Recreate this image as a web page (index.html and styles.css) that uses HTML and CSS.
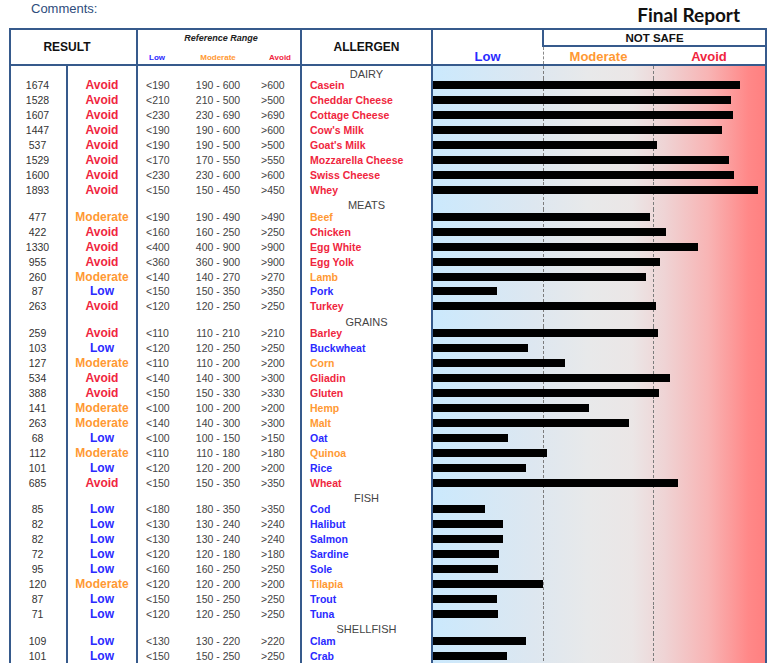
FILE: index.html
```html
<!DOCTYPE html>
<html lang="en">
<head>
<meta charset="utf-8">
<title>Final Report</title>
<link rel="stylesheet" href="styles.css">
</head>
<body>
<div class="top">
  <div class="comments">Comments:</div>
  <div class="title">Final Report</div>
</div>
<div class="report">
  <div class="head">
    <div class="h-result">RESULT</div>
    <div class="h-range">
      <div class="h-range-title">Reference Range</div>
      <div class="h-range-labels"><span class="c-low">Low</span><span class="c-mod">Moderate</span><span class="c-avo">Avoid</span></div>
    </div>
    <div class="h-allergen">ALLERGEN</div>
    <div class="h-chart">
      <div class="h-low c-low">Low</div>
      <div class="h-notsafe">
        <div class="notsafe">NOT SAFE</div>
        <div class="h-levels"><span class="c-mod">Moderate</span><span class="c-avo">Avoid</span></div>
      </div>
    </div>
  </div>
  <div class="body">
    <div class="row cat"><div></div><div></div><div></div><div class="n">DAIRY</div><div class="ch"></div></div>
    <div class="row is-avoid"><div class="v">1674</div><div class="s">Avoid</div><div class="rg"><span>&lt;190</span><span>190 - 600</span><span>&gt;600</span></div><div class="n">Casein</div><div class="ch"><div class="bar" style="width:307px"></div></div></div>
    <div class="row is-avoid"><div class="v">1528</div><div class="s">Avoid</div><div class="rg"><span>&lt;210</span><span>210 - 500</span><span>&gt;500</span></div><div class="n">Cheddar Cheese</div><div class="ch"><div class="bar" style="width:298px"></div></div></div>
    <div class="row is-avoid"><div class="v">1607</div><div class="s">Avoid</div><div class="rg"><span>&lt;230</span><span>230 - 690</span><span>&gt;690</span></div><div class="n">Cottage Cheese</div><div class="ch"><div class="bar" style="width:300px"></div></div></div>
    <div class="row is-avoid"><div class="v">1447</div><div class="s">Avoid</div><div class="rg"><span>&lt;190</span><span>190 - 600</span><span>&gt;600</span></div><div class="n">Cow's Milk</div><div class="ch"><div class="bar" style="width:289px"></div></div></div>
    <div class="row is-avoid"><div class="v">537</div><div class="s">Avoid</div><div class="rg"><span>&lt;190</span><span>190 - 500</span><span>&gt;500</span></div><div class="n">Goat's Milk</div><div class="ch"><div class="bar" style="width:224px"></div></div></div>
    <div class="row is-avoid"><div class="v">1529</div><div class="s">Avoid</div><div class="rg"><span>&lt;170</span><span>170 - 550</span><span>&gt;550</span></div><div class="n">Mozzarella Cheese</div><div class="ch"><div class="bar" style="width:296px"></div></div></div>
    <div class="row is-avoid"><div class="v">1600</div><div class="s">Avoid</div><div class="rg"><span>&lt;230</span><span>230 - 600</span><span>&gt;600</span></div><div class="n">Swiss Cheese</div><div class="ch"><div class="bar" style="width:301px"></div></div></div>
    <div class="row is-avoid"><div class="v">1893</div><div class="s">Avoid</div><div class="rg"><span>&lt;150</span><span>150 - 450</span><span>&gt;450</span></div><div class="n">Whey</div><div class="ch"><div class="bar" style="width:325px"></div></div></div>

    <div class="row cat"><div></div><div></div><div></div><div class="n">MEATS</div><div class="ch"></div></div>
    <div class="row is-mod"><div class="v">477</div><div class="s">Moderate</div><div class="rg"><span>&lt;190</span><span>190 - 490</span><span>&gt;490</span></div><div class="n">Beef</div><div class="ch"><div class="bar" style="width:217px"></div></div></div>
    <div class="row is-avoid"><div class="v">422</div><div class="s">Avoid</div><div class="rg"><span>&lt;160</span><span>160 - 250</span><span>&gt;250</span></div><div class="n">Chicken</div><div class="ch"><div class="bar" style="width:233px"></div></div></div>
    <div class="row is-avoid"><div class="v">1330</div><div class="s">Avoid</div><div class="rg"><span>&lt;400</span><span>400 - 900</span><span>&gt;900</span></div><div class="n">Egg White</div><div class="ch"><div class="bar" style="width:265px"></div></div></div>
    <div class="row is-avoid"><div class="v">955</div><div class="s">Avoid</div><div class="rg"><span>&lt;360</span><span>360 - 900</span><span>&gt;900</span></div><div class="n">Egg Yolk</div><div class="ch"><div class="bar" style="width:227px"></div></div></div>
    <div class="row is-mod"><div class="v">260</div><div class="s">Moderate</div><div class="rg"><span>&lt;140</span><span>140 - 270</span><span>&gt;270</span></div><div class="n">Lamb</div><div class="ch"><div class="bar" style="width:213px"></div></div></div>
    <div class="row is-low"><div class="v">87</div><div class="s">Low</div><div class="rg"><span>&lt;150</span><span>150 - 350</span><span>&gt;350</span></div><div class="n">Pork</div><div class="ch"><div class="bar" style="width:64px"></div></div></div>
    <div class="row is-avoid"><div class="v">263</div><div class="s">Avoid</div><div class="rg"><span>&lt;120</span><span>120 - 250</span><span>&gt;250</span></div><div class="n">Turkey</div><div class="ch"><div class="bar" style="width:223px"></div></div></div>

    <div class="row cat"><div></div><div></div><div></div><div class="n">GRAINS</div><div class="ch"></div></div>
    <div class="row is-avoid"><div class="v">259</div><div class="s">Avoid</div><div class="rg"><span>&lt;110</span><span>110 - 210</span><span>&gt;210</span></div><div class="n">Barley</div><div class="ch"><div class="bar" style="width:225px"></div></div></div>
    <div class="row is-low"><div class="v">103</div><div class="s">Low</div><div class="rg"><span>&lt;120</span><span>120 - 250</span><span>&gt;250</span></div><div class="n">Buckwheat</div><div class="ch"><div class="bar" style="width:95px"></div></div></div>
    <div class="row is-mod"><div class="v">127</div><div class="s">Moderate</div><div class="rg"><span>&lt;110</span><span>110 - 200</span><span>&gt;200</span></div><div class="n">Corn</div><div class="ch"><div class="bar" style="width:132px"></div></div></div>
    <div class="row is-avoid"><div class="v">534</div><div class="s">Avoid</div><div class="rg"><span>&lt;140</span><span>140 - 300</span><span>&gt;300</span></div><div class="n">Gliadin</div><div class="ch"><div class="bar" style="width:237px"></div></div></div>
    <div class="row is-avoid"><div class="v">388</div><div class="s">Avoid</div><div class="rg"><span>&lt;150</span><span>150 - 330</span><span>&gt;330</span></div><div class="n">Gluten</div><div class="ch"><div class="bar" style="width:226px"></div></div></div>
    <div class="row is-mod"><div class="v">141</div><div class="s">Moderate</div><div class="rg"><span>&lt;100</span><span>100 - 200</span><span>&gt;200</span></div><div class="n">Hemp</div><div class="ch"><div class="bar" style="width:156px"></div></div></div>
    <div class="row is-mod"><div class="v">263</div><div class="s">Moderate</div><div class="rg"><span>&lt;140</span><span>140 - 300</span><span>&gt;300</span></div><div class="n">Malt</div><div class="ch"><div class="bar" style="width:196px"></div></div></div>
    <div class="row is-low"><div class="v">68</div><div class="s">Low</div><div class="rg"><span>&lt;100</span><span>100 - 150</span><span>&gt;150</span></div><div class="n">Oat</div><div class="ch"><div class="bar" style="width:75px"></div></div></div>
    <div class="row is-mod"><div class="v">112</div><div class="s">Moderate</div><div class="rg"><span>&lt;110</span><span>110 - 180</span><span>&gt;180</span></div><div class="n">Quinoa</div><div class="ch"><div class="bar" style="width:114px"></div></div></div>
    <div class="row is-low"><div class="v">101</div><div class="s">Low</div><div class="rg"><span>&lt;120</span><span>120 - 200</span><span>&gt;200</span></div><div class="n">Rice</div><div class="ch"><div class="bar" style="width:93px"></div></div></div>
    <div class="row is-avoid"><div class="v">685</div><div class="s">Avoid</div><div class="rg"><span>&lt;150</span><span>150 - 350</span><span>&gt;350</span></div><div class="n">Wheat</div><div class="ch"><div class="bar" style="width:245px"></div></div></div>

    <div class="row cat"><div></div><div></div><div></div><div class="n">FISH</div><div class="ch"></div></div>
    <div class="row is-low"><div class="v">85</div><div class="s">Low</div><div class="rg"><span>&lt;180</span><span>180 - 350</span><span>&gt;350</span></div><div class="n">Cod</div><div class="ch"><div class="bar" style="width:52px"></div></div></div>
    <div class="row is-low"><div class="v">82</div><div class="s">Low</div><div class="rg"><span>&lt;130</span><span>130 - 240</span><span>&gt;240</span></div><div class="n">Halibut</div><div class="ch"><div class="bar" style="width:70px"></div></div></div>
    <div class="row is-low"><div class="v">82</div><div class="s">Low</div><div class="rg"><span>&lt;130</span><span>130 - 240</span><span>&gt;240</span></div><div class="n">Salmon</div><div class="ch"><div class="bar" style="width:70px"></div></div></div>
    <div class="row is-low"><div class="v">72</div><div class="s">Low</div><div class="rg"><span>&lt;120</span><span>120 - 180</span><span>&gt;180</span></div><div class="n">Sardine</div><div class="ch"><div class="bar" style="width:66px"></div></div></div>
    <div class="row is-low"><div class="v">95</div><div class="s">Low</div><div class="rg"><span>&lt;160</span><span>160 - 250</span><span>&gt;250</span></div><div class="n">Sole</div><div class="ch"><div class="bar" style="width:65px"></div></div></div>
    <div class="row is-mod"><div class="v">120</div><div class="s">Moderate</div><div class="rg"><span>&lt;120</span><span>120 - 200</span><span>&gt;200</span></div><div class="n">Tilapia</div><div class="ch"><div class="bar" style="width:110px"></div></div></div>
    <div class="row is-low"><div class="v">87</div><div class="s">Low</div><div class="rg"><span>&lt;150</span><span>150 - 250</span><span>&gt;250</span></div><div class="n">Trout</div><div class="ch"><div class="bar" style="width:64px"></div></div></div>
    <div class="row is-low"><div class="v">71</div><div class="s">Low</div><div class="rg"><span>&lt;120</span><span>120 - 250</span><span>&gt;250</span></div><div class="n">Tuna</div><div class="ch"><div class="bar" style="width:65px"></div></div></div>

    <div class="row cat"><div></div><div></div><div></div><div class="n">SHELLFISH</div><div class="ch"></div></div>
    <div class="row is-low"><div class="v">109</div><div class="s">Low</div><div class="rg"><span>&lt;130</span><span>130 - 220</span><span>&gt;220</span></div><div class="n">Clam</div><div class="ch"><div class="bar" style="width:93px"></div></div></div>
    <div class="row is-low"><div class="v">101</div><div class="s">Low</div><div class="rg"><span>&lt;150</span><span>150 - 250</span><span>&gt;250</span></div><div class="n">Crab</div><div class="ch"><div class="bar" style="width:74px"></div></div></div>
  </div>
</div>
</body>
</html>
```

FILE: styles.css
```css
html, body {
  margin: 0;
  height: 664px;
  overflow: hidden;
  background: #fff;
}

body {
  font-family: "Liberation Sans", Arial, sans-serif;
  color: #333;
}

.c-low { color: #2a2aff; }
.c-mod { color: #ff9933; }
.c-avo { color: #f0263e; }

.top {
  display: flex;
  justify-content: space-between;
  align-items: flex-start;
  height: 28px;
  padding: 0 35px 0 31px;
}

.comments {
  font-size: 13px;
  line-height: 15px;
  margin-top: 1px;
  color: #2e4c7c;
}

.title {
  font-family: Lato, "Liberation Sans", sans-serif;
  font-weight: 700;
  font-size: 19px;
  line-height: 22px;
  margin-top: 4px;
  color: #111;
}

.report {
  margin-left: 9px;
  width: 758px;
  box-sizing: border-box;
  border: 2px solid #365a8c;
  border-bottom: 0;
  background: #365a8c;
  display: flex;
  flex-direction: column;
  gap: 2px;
}

.head {
  display: grid;
  grid-template-columns: 125px 162px 129px 332px;
  column-gap: 2px;
  height: 34px;
}

.head > div {
  background: #fff;
}

.h-result,
.h-allergen {
  display: flex;
  align-items: center;
  justify-content: center;
  font-weight: 700;
  font-size: 12px;
  color: #111;
}

.h-result {
  padding-right: 13px;
}

.h-range {
  display: flex;
  flex-direction: column;
  justify-content: space-between;
  padding: 3px 0 2px;
  box-sizing: border-box;
}

.h-range-title {
  text-align: center;
  font-style: italic;
  font-weight: 700;
  font-size: 9px;
  line-height: 10px;
  padding-left: 4px;
  color: #222;
}

.h-range-labels {
  display: grid;
  grid-template-columns: 52px 56px 1fr;
  font-weight: 700;
  font-size: 8px;
  line-height: 9px;
}

.h-range-labels span:nth-child(1) { padding-left: 11px; }
.h-range-labels span:nth-child(2) { text-align: center; }
.h-range-labels span:nth-child(3) { text-align: right; padding-right: 9px; }

.h-chart {
  display: grid;
  grid-template-columns: 109px 1fr;
}

.h-low {
  display: flex;
  align-items: flex-end;
  justify-content: center;
  font-weight: 700;
  font-size: 13px;
  line-height: 15px;
}

.h-notsafe {
  display: flex;
  flex-direction: column;
}

.notsafe {
  height: 15px;
  border-left: 2px solid #365a8c;
  border-bottom: 2px solid #365a8c;
  font-weight: 700;
  font-size: 11.5px;
  line-height: 16px;
  text-align: center;
  color: #111;
}

.h-levels {
  flex: 1;
  display: grid;
  grid-template-columns: 109px 1fr;
  align-items: end;
  margin-left: 1px;
  border-left: 1px dashed #8a8a8a;
  font-weight: 700;
  font-size: 13px;
  line-height: 15px;
  text-align: center;
}

.row {
  display: grid;
  grid-template-columns: 55px 68px 162px 129px 332px;
  column-gap: 2px;
  height: 14.93px;
  font-size: 10.5px;
}

.row.cat {
  height: 12px;
}

.row > div {
  background: #fff;
  display: flex;
  align-items: center;
  white-space: nowrap;
}

.v {
  justify-content: center;
  padding-right: 2px;
  color: #333;
}

.s {
  justify-content: center;
  font-weight: 700;
  font-size: 12px;
}

.row > .rg {
  display: grid;
  grid-template-columns: 52px 56px 1fr;
  align-items: center;
  color: #444;
}

.rg span:nth-child(1) { padding-left: 8px; }
.rg span:nth-child(2) { text-align: center; }
.rg span:nth-child(3) { padding-left: 15px; }

.n {
  padding-left: 8px;
  font-weight: 700;
}

.row.cat .n {
  padding-left: 0;
  padding-top: 2px;
  box-sizing: border-box;
  justify-content: center;
  font-weight: 400;
  font-size: 11px;
  color: #444;
}

.is-avoid .s, .is-avoid .n { color: #f0263e; }
.is-mod .s, .is-mod .n { color: #ff9933; }
.is-low .s, .is-low .n { color: #2a2aff; }

.row > .ch {
  background:
    linear-gradient(#7c7c7c 60%, transparent 60%) 110px 0 / 1px 5px repeat-y,
    linear-gradient(#7c7c7c 60%, transparent 60%) 220px 0 / 1px 5px repeat-y,
    linear-gradient(to right, #cbe9fd 0%, #dde7f0 30%, #e8e9ea 47%, #ebe6e6 60%, #efd3d4 70%, #f8b4b4 83%, #ff8888 95%, #ff8080 100%);
}

.bar {
  height: 8px;
  background: #000;
}
```
